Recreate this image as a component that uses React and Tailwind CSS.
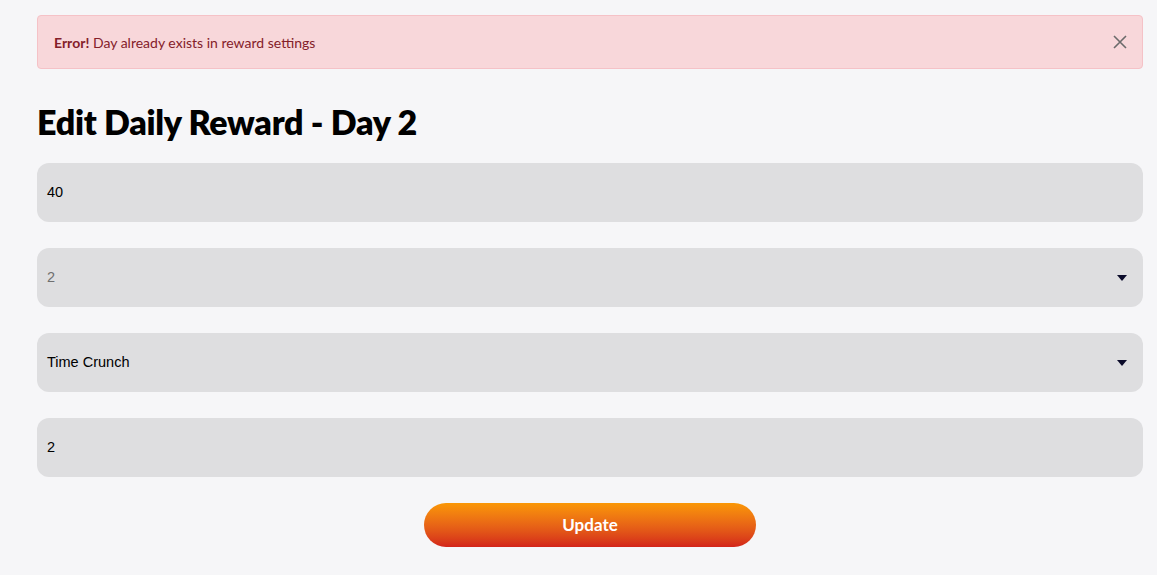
import React from 'react'

const FIELDS = [
  { value: '40', select: false, muted: false },
  { value: '2', select: true, muted: true },
  { value: 'Time Crunch', select: true, muted: false },
  { value: '2', select: false, muted: false },
]

function Caret() {
  return (
    <svg width="10" height="6" viewBox="0 0 10 6" className="text-[#0b0b2a]">
      <path d="M0 0h10L5 6z" fill="currentColor" />
    </svg>
  )
}

export default function App() {
  return (
    <div className="min-h-[575px] bg-[#f6f6f8] pl-[37px] pr-[14px] pt-[15px] pb-7 font-['Lato',sans-serif]">
      {/* Alert */}
      <div className="h-[54px] rounded-[4px] border border-[#f5c2c7] bg-[#f8d7da] pl-4 pr-[10px] flex items-center justify-between text-[14px] text-[#842029]">
        <div>
          <span className="font-bold">Error!</span> Day already exists in reward settings
        </div>
        <button className="w-6 h-6 flex items-center justify-center text-[#6b6b6b]">
          <svg width="14" height="14" viewBox="0 0 14 14" fill="none" stroke="currentColor" strokeWidth="1.6">
            <path d="M1 1l12 12M13 1L1 13" />
          </svg>
        </button>
      </div>

      <h1 className="mt-[33px] text-[34px] leading-[40px] font-extrabold text-black tracking-[-0.3px]">
        Edit Daily Reward - Day 2
      </h1>

      <div className="mt-[21px] flex flex-col gap-[26px]">
        {FIELDS.map((f, i) => (
          <div
            key={i}
            className="h-[59px] rounded-[12px] bg-[#dedee0] px-[10px] flex items-center justify-between font-['Liberation_Sans',Arial,sans-serif] text-[14.5px]"
          >
            <span className={f.muted ? 'text-[#6f6f6f]' : 'text-black'}>{f.value}</span>
            {f.select && <span className="mr-[6px] flex"><Caret /></span>}
          </div>
        ))}
      </div>

      <div className="mt-[26px] flex justify-center">
        <button className="w-[332px] h-[44px] rounded-full bg-gradient-to-b from-[#fa9705] to-[#d3231a] text-white font-bold text-[17px]">
          Update
        </button>
      </div>
    </div>
  )
}
